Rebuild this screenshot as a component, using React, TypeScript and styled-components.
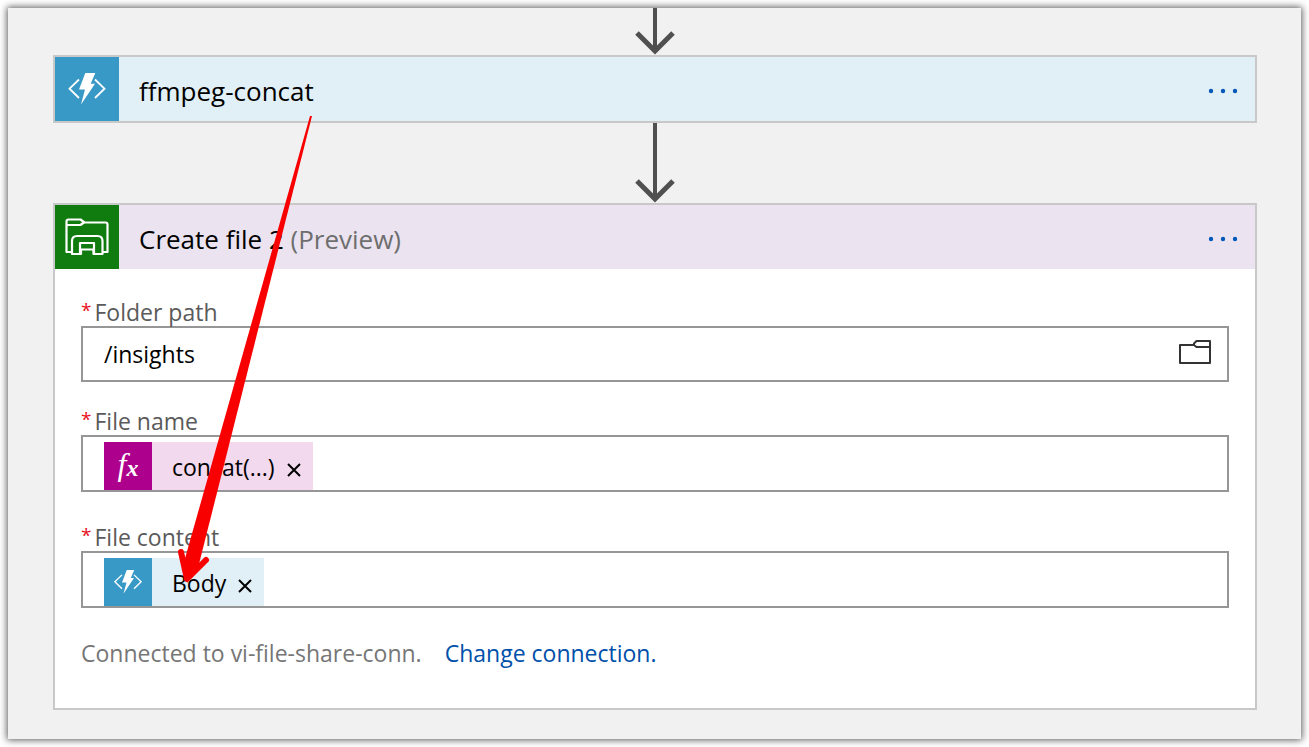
import React from "react";
import styled, { createGlobalStyle } from "styled-components";

const GlobalStyle = createGlobalStyle`
  * { box-sizing: border-box; }
  body {
    margin: 0;
    background: #ffffff;
    font-family: "Open Sans", "Noto Sans", sans-serif;
    color: #000000;
  }
`;

const Page = styled.main`
  padding: 8px;
`;

const Canvas = styled.section`
  position: relative;
  display: flex;
  flex-direction: column;
  padding: 0 44px 29px 45px;
  background: #f1f1f1;
  box-shadow: 0 0 7px 1px rgba(0, 0, 0, 0.65);
`;

const Connector = styled.svg<{ $height: number }>`
  display: block;
  align-self: center;
  width: 40px;
  height: ${(p) => p.$height}px;
  fill: none;
  stroke: #505050;
  stroke-width: 4;
`;

const Card = styled.article`
  border: 2px solid #c8c8c8;
  background: #ffffff;
`;

const CardHeader = styled.header<{ $tint: string }>`
  display: flex;
  align-items: center;
  height: 64px;
  padding-right: 14px;
  background: ${(p) => p.$tint};
`;

const IconTile = styled.span<{ $color: string; $size: number }>`
  display: flex;
  align-items: center;
  justify-content: center;
  flex: none;
  width: ${(p) => p.$size}px;
  height: ${(p) => p.$size}px;
  background: ${(p) => p.$color};
  color: #ffffff;
`;

const CardTitle = styled.h2`
  flex: 1;
  margin: 0;
  padding: 4px 0 0 20px;
  font-size: 26px;
  line-height: 36px;
  font-weight: 400;
`;

const Muted = styled.span`
  color: #6e6e6e;
`;

const IconButton = styled.button`
  display: flex;
  flex: none;
  padding: 0;
  border: 0;
  background: transparent;
  color: inherit;
  cursor: pointer;
`;

const CardBody = styled.div`
  padding: 31px 26px 41px;
`;

const Field = styled.div<{ $gap: number }>`
  margin-bottom: ${(p) => p.$gap}px;
`;

const Label = styled.label`
  display: flex;
  gap: 3px;
  padding-bottom: 2px;
  color: #5a5a5a;
  font-size: 23px;
  line-height: 24px;
`;

const Required = styled.span`
  color: #e81123;
  font-size: 19px;
  line-height: 20px;
`;

const TextBox = styled.div`
  display: flex;
  align-items: center;
  height: 56px;
  padding: 0 15px 0 21px;
  border: 2px solid #969696;
`;

const TokenBox = styled.div`
  display: flex;
  padding: 5px 15px 0 21px;
  border: 2px solid #969696;
`;

const BareInput = styled.input`
  flex: 1;
  min-width: 0;
  padding: 0;
  border: 0;
  outline: 0;
  background: transparent;
  color: #000000;
  font-family: inherit;
  font-size: 23px;
`;

const Token = styled.span<{ $tint: string }>`
  display: flex;
  align-items: center;
  flex: none;
  height: 48px;
  padding-right: 11px;
  background: ${(p) => p.$tint};
  font-size: 23px;
  line-height: 32px;
`;

const TokenText = styled.span`
  padding: 2px 11px 0 20px;
`;

const RemoveButton = styled(IconButton)`
  padding-top: 8px;
`;

const Fx = styled.span`
  padding-bottom: 4px;
  font-family: "Liberation Serif", serif;
  font-style: italic;
  font-weight: 400;
  font-size: 32px;
  line-height: 32px;
`;

const FxSmall = styled.sub`
  font-size: 24px;
  font-weight: 700;
  line-height: 24px;
  vertical-align: -1px;
`;

const ConnectionLine = styled.p`
  display: flex;
  gap: 23px;
  margin: 0;
  color: #767676;
  font-size: 23px;
  line-height: 28px;
`;

const Link = styled.a`
  color: #0050aa;
  text-decoration: none;
`;

const Annotation = styled.svg`
  position: absolute;
  top: 104px;
  left: 164px;
  width: 148px;
  height: 480px;
  pointer-events: none;
`;

const FunctionIcon = ({ size }: { size: number }) => (
  <svg width={size} height={size} viewBox="0 0 64 64" aria-hidden="true">
    <path d="M24 22.500 14.500 31.700 24 41" fill="none" stroke="#fff" strokeWidth="1.800" />
    <path d="M40 22.500 49.500 31.700 40 41" fill="none" stroke="#fff" strokeWidth="1.800" />
    <path d="M30.3 16H40.3L35.7 26.7H40L26 47.5 30 32.5H24Z" fill="#fff" />
  </svg>
);

const StorageIcon = () => (
  <svg width="64" height="64" viewBox="0 0 64 64" fill="none" stroke="#fff" strokeWidth="2.200" strokeLinejoin="round" aria-hidden="true">
    <path d="M17 47H11.500V16.500Q11.500 14.500 13.500 14.500H25.500L29.500 17.500H50.500Q52.500 17.500 52.500 19.500V47H47" />
    <path d="M12 20H25.500L29.500 17" />
    <path d="M17 49V36Q17 31 22 31H42.500Q47.500 31 47.500 36V49H38.500V44.500H26V49Z" />
    <path d="M25 49V38H39V49" />
  </svg>
);

const FolderIcon = () => (
  <svg width="34" height="30" viewBox="0 0 34 30" fill="none" stroke="#333" strokeWidth="2" strokeLinejoin="round" aria-hidden="true">
    <path d="M16 6H2V24H32V2H18.500L16 4.500V6L18.500 8H32" />
  </svg>
);

const MoreButton = () => (
  <IconButton type="button" aria-label="More commands">
    <svg width="36" height="12" viewBox="0 0 36 12" fill="#0058b8" aria-hidden="true">
      <circle cx="6" cy="8" r="2.200" />
      <circle cx="18" cy="8" r="2.200" />
      <circle cx="30" cy="8" r="2.200" />
    </svg>
  </IconButton>
);

const Remove = ({ label }: { label: string }) => (
  <RemoveButton type="button" aria-label={label}>
    <svg width="16" height="16" viewBox="0 0 16 16" stroke="#000" strokeWidth="2" aria-hidden="true">
      <path d="M2 2 14 14M14 2 2 14" />
    </svg>
  </RemoveButton>
);

const FieldLabel = ({ id, text }: { id: string; text: string }) => (
  <Label htmlFor={id}>
    <Required>*</Required>
    {text}
  </Label>
);

const FlowArrow = ({ height }: { height: number }) => (
  <Connector $height={height} viewBox={`0 0 40 ${height}`} aria-hidden="true">
    <path d={`M20 0V${height - 3}`} />
    <path d={`M2 ${height - 22}L20 ${height - 4}L38 ${height - 22}`} strokeWidth="5" />
  </Connector>
);

export default function App() {
  return (
    <>
      <GlobalStyle />
      <Page>
        <Canvas>
          <FlowArrow height={47} />
          <Card>
            <CardHeader $tint="#e1eff6">
              <IconTile $color="#3999c6" $size={64}>
                <FunctionIcon size={64} />
              </IconTile>
              <CardTitle>ffmpeg-concat</CardTitle>
              <MoreButton />
            </CardHeader>
          </Card>
          <FlowArrow height={80} />
          <Card>
            <CardHeader $tint="#ebe4f0">
              <IconTile $color="#107c10" $size={64}>
                <StorageIcon />
              </IconTile>
              <CardTitle>
                Create file 2 <Muted>(Preview)</Muted>
              </CardTitle>
              <MoreButton />
            </CardHeader>
            <CardBody>
              <Field $gap={27}>
                <FieldLabel id="folder-path" text="Folder path" />
                <TextBox>
                  <BareInput id="folder-path" defaultValue="/insights" />
                  <IconButton type="button" aria-label="Browse folders">
                    <FolderIcon />
                  </IconButton>
                </TextBox>
              </Field>
              <Field $gap={33}>
                <FieldLabel id="file-name" text="File name" />
                <TokenBox>
                  <Token $tint="#f2d9ed">
                    <IconTile $color="#ad008c" $size={48}>
                      <Fx>
                        f<FxSmall>x</FxSmall>
                      </Fx>
                    </IconTile>
                    <TokenText>concat(...)</TokenText>
                    <Remove label="Remove concat(...)" />
                  </Token>
                  <BareInput id="file-name" />
                </TokenBox>
              </Field>
              <Field $gap={31}>
                <FieldLabel id="file-content" text="File content" />
                <TokenBox>
                  <Token $tint="#e1eff6">
                    <IconTile $color="#3999c6" $size={48}>
                      <FunctionIcon size={48} />
                    </IconTile>
                    <TokenText>Body</TokenText>
                    <Remove label="Remove Body" />
                  </Token>
                  <BareInput id="file-content" />
                </TokenBox>
              </Field>
              <ConnectionLine>
                <span>Connected to vi-file-share-conn.</span>
                <Link href="#change-connection">Change connection.</Link>
              </ConnectionLine>
            </CardBody>
          </Card>
          <Annotation viewBox="172 112 148 480" aria-hidden="true">
            <path d="M310 116H312L198 568 187 583 184 562Z" fill="#f80000" />
            <path d="M181 552 187 579 206 560" fill="none" stroke="#f80000" strokeWidth="6" strokeLinecap="round" strokeLinejoin="round" />
          </Annotation>
        </Canvas>
      </Page>
    </>
  );
}
